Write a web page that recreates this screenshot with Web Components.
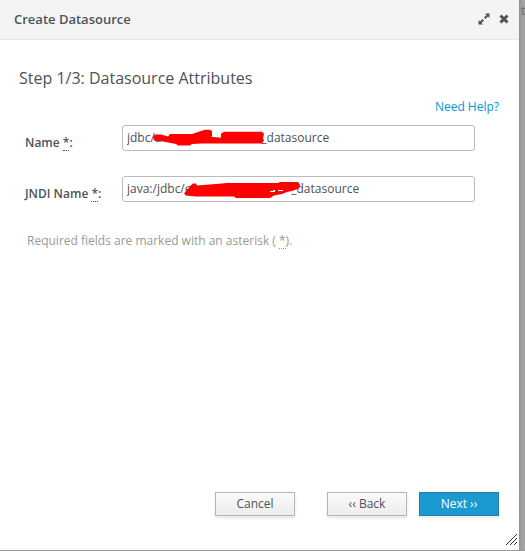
<!DOCTYPE html>
<html lang="en">
<head>
<meta charset="utf-8">
<title>Create Datasource</title>
<style>
  body { margin: 0; color: #4d5258; font: 12px/18px "Open Sans", "Noto Sans", sans-serif; }
</style>
</head>
<body>
<app-backdrop>
  <wizard-dialog heading="Create Datasource">
    <wizard-step heading="Step 1/3: Datasource Attributes">
      <text-field label="Name" value="jdbc/a                                _datasource">
        <svg slot="mark" width="353" height="26" viewBox="0 0 353 26" aria-hidden="true"><path fill="#f00" d="M31 12l2-2.500h6l7 2 2-2.500h22l9-3 4-1.200h5l2 1.500v4.500l-1 1 10 1v-4l3-2h38l2 2-1 4.500 1 2-2 3.200H80l-10 .5-2 1.500H56l-2-1.500-13-2.500-9-1z"/></svg>
      </text-field>
      <text-field label="JNDI Name" value="java:/jdbc/e                                _datasource">
        <svg slot="mark" width="353" height="26" viewBox="0 0 353 26" aria-hidden="true"><path fill="#f00" d="M62 17.500l3-3.500 3-4 3-2.500h3l1 2 25-2 5-.5h51l2-1h18l2 2.500-1 4-7 2.500-5 1-5 2-8 1.500-4 2.500h-34l-2-1.500H74l-10-1z"/><path fill="#fff" d="M148 15h3v-1h2v2h-5zM156 14h5v1h-5z"/></svg>
      </text-field>
    </wizard-step>
  </wizard-dialog>
</app-backdrop>

<script>
const define = (name, markup, setup) => {
  const template = document.createElement('template');
  template.innerHTML = markup;
  customElements.define(name, class extends HTMLElement {
    constructor() {
      super();
      this.attachShadow({ mode: 'open' }).append(template.content.cloneNode(true));
    }
    connectedCallback() { if (setup) setup(this, this.shadowRoot); }
  });
};

define('app-backdrop', `
  <style>
    :host { display: grid; grid-template-columns: minmax(0, 1fr) 6px; min-height: 100vh; box-sizing: border-box; padding-bottom: 1px; background: #999; }
    .edge { overflow: hidden; padding-top: 2px; font-size: 12px; line-height: 18px; color: #5f6a7a; padding-left: 2px; background: linear-gradient(90deg, #8f8f8f, #a2a2a2 3px, #a2a2a2); }
  </style>
  <slot></slot><div class="edge">t</div>`);

define('required-mark', `
  <style>
    :host { display: inline; }
    abbr { display: inline-block; line-height: 14px; text-decoration: none; border-bottom: 1px dotted currentColor; cursor: help; }
  </style>
  <abbr title="required">*</abbr>`);

define('push-button', `
  <style>
    :host { display: block; }
    button { display: block; width: 80px; height: 24px; padding: 0; box-sizing: border-box; border: 1px solid #b7b7b7; font: inherit; line-height: 20px; color: #4d5258; background: linear-gradient(#fafafa, #ededed); box-shadow: 0 2px 3px rgba(0,0,0,.1); }
    :host([primary]) button { color: #fff; border-color: #267da1; background: #1b9ad1; }
  </style>
  <button type="button"><slot></slot></button>`);

define('text-field', `
  <style>
    :host { display: flex; align-items: flex-start; padding: 0 24px 0 5px; }
    label { width: 97px; flex: none; padding-top: 9px; font-weight: 600; line-height: 18px; color: #4d5258; }
    .box { position: relative; flex: 1; min-width: 0; }
    input { display: block; width: 100%; height: 26px; box-sizing: border-box; border: 1px solid #bbb; border-radius: 3px; padding: 0 4px 1px; font: inherit; color: #4d5258; background: #fff; }
    ::slotted(svg) { position: absolute; inset: 0 auto auto 0; pointer-events: none; }
  </style>
  <label for="field"><span></span><required-mark></required-mark>:</label>
  <div class="box"><input id="field" type="text" spellcheck="false"><slot name="mark"></slot></div>`,
  (host, root) => {
    root.querySelector('span').textContent = host.getAttribute('label');
    root.querySelector('input').value = host.getAttribute('value');
  });

define('wizard-step', `
  <style>
    :host { display: flex; flex-direction: column; padding: 26px 20px 0; }
    h2 { margin: 0 0 0 -1px; font-size: 16px; line-height: 24px; font-weight: 400; }
    a { align-self: flex-end; margin-top: 8px; color: #0099d3; text-decoration: none; line-height: 18px; }
    .fields { display: flex; flex-direction: column; gap: 24px; margin-top: 9px; }
    p { margin: 29px 0 0 7px; color: #999; line-height: 18px; }
  </style>
  <h2></h2>
  <a href="#help">Need Help?</a>
  <div class="fields"><slot></slot></div>
  <p>Required fields are marked with an asterisk (<required-mark></required-mark>).</p>`,
  (host, root) => { root.querySelector('h2').textContent = host.getAttribute('heading'); });

define('wizard-dialog', `
  <style>
    :host { position: relative; display: flex; flex-direction: column; background: #fff; }
    header { display: flex; align-items: center; height: 38px; flex: none; padding: 0 5px 1px 14px; background: #f4f4f4; border-bottom: 1px solid #e7e7e7; }
    h1 { flex: 1; margin: 0; font-size: 13px; line-height: 18px; font-weight: 600; }
    .icon { display: grid; place-items: center; width: 20px; height: 20px; border: 0; padding: 0; background: none; color: #4d5258; }
    main { flex: 1; }
    footer { display: flex; justify-content: flex-end; padding: 20px 20px 34px; }
    .back { margin: 0 12px 0 32px; }
    .grip { position: absolute; right: 2px; bottom: 5px; }
  </style>
  <header>
    <h1></h1>
    <button class="icon" type="button" aria-label="Maximize">
      <svg width="12" height="12" viewBox="0 0 12 12"><path d="M7 .5H11.500V5L10 3.500 7.400 6 6 4.600 8.500 2zM.5 7V11.500H5L3.500 10 6 7.400 4.600 6 2 8.500z" fill="currentColor"/></svg>
    </button>
    <button class="icon" type="button" aria-label="Close">
      <svg width="10" height="10" viewBox="0 0 10 10"><path d="M1.500 1.500l7 7M8.500 1.500l-7 7" stroke="currentColor" stroke-width="3"/></svg>
    </button>
  </header>
  <main><slot></slot></main>
  <footer>
    <push-button>Cancel</push-button>
    <push-button class="back">‹‹ Back</push-button>
    <push-button primary>Next ››</push-button>
  </footer>
  <svg class="grip" width="11" height="11" viewBox="0 0 11 11" aria-hidden="true"><path d="M0 11L11 0M4 11l7-7M8 11l3-3" stroke="#333" stroke-width="1"/></svg>`,
  (host, root) => { root.querySelector('h1').textContent = host.getAttribute('heading'); });
</script>
</body>
</html>
